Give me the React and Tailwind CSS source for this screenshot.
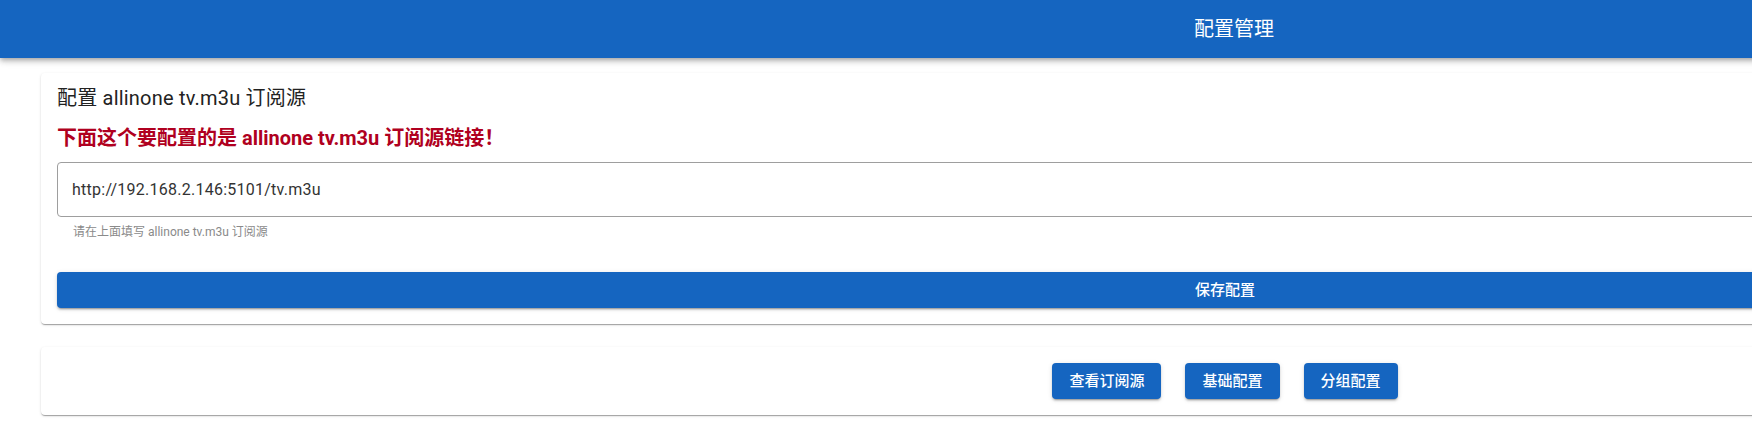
const cardShadow =
  "shadow-[0_2px_1px_-1px_rgba(0,0,0,0.2),0_1px_1px_0_rgba(0,0,0,0.14),0_1px_3px_0_rgba(0,0,0,0.12)]";

const NavButton = ({ label }) => (
  <button className="h-[36px] px-[17px] rounded-[4px] bg-[#1565c0] text-white text-[15px] font-medium shadow-[0_3px_1px_-2px_rgba(0,0,0,0.2),0_2px_2px_0_rgba(0,0,0,0.14),0_1px_5px_0_rgba(0,0,0,0.12)]">
    {label}
  </button>
);

const App = () => {
  const navs = ["查看订阅源", "基础配置", "分组配置"];

  return (
    <div className="w-[1752px] h-[427px] overflow-hidden bg-white font-['Roboto','Noto_Sans_CJK_SC',sans-serif]">
      <div className="w-[2450px]">
        {/* Header */}
        <header className="relative z-10 h-[58px] bg-[#1565c0] flex items-center justify-center pl-[18px] text-white text-[20px] shadow-[0_2px_4px_-1px_rgba(0,0,0,0.2),0_4px_5px_0_rgba(0,0,0,0.14),0_1px_10px_0_rgba(0,0,0,0.12)]">
          配置管理
        </header>

        <main className="px-[41px] pt-[15px]">
          {/* Subscription card */}
          <div className={`bg-white rounded-[4px] px-4 pt-[13px] pb-4 ${cardShadow}`}>
            <h2 className="text-[20px] leading-[24px] tracking-[0.2px] text-[#222]">
              配置 allinone tv.m3u 订阅源
            </h2>
            <p className="mt-4 text-[20px] leading-[24px] font-bold text-[#b00020]">
              下面这个要配置的是 allinone tv.m3u 订阅源链接！
            </p>
            <input
              defaultValue="http://192.168.2.146:5101/tv.m3u"
              className="mt-3 block w-full h-[55px] px-[14px] rounded-[4px] border border-[#9e9e9e] text-[16px] tracking-[0.25px] text-[#333] outline-none"
            />
            <p className="mx-4 mt-[5px] text-[12px] leading-[20px] text-[#8a8a8a]">
              请在上面填写 allinone tv.m3u 订阅源
            </p>
            <button className="mt-[30px] w-full h-[36px] rounded-[4px] bg-[#1565c0] text-white text-[15px] font-medium shadow-[0_3px_1px_-2px_rgba(0,0,0,0.2),0_2px_2px_0_rgba(0,0,0,0.14),0_1px_5px_0_rgba(0,0,0,0.12)]">
              保存配置
            </button>
          </div>

          {/* Navigation card */}
          <div className={`mt-[23px] bg-white rounded-[4px] p-4 flex justify-center gap-6 ${cardShadow}`}>
            {navs.map((n) => (
              <NavButton key={n} label={n} />
            ))}
          </div>
        </main>
      </div>
    </div>
  );
};

export default App;
